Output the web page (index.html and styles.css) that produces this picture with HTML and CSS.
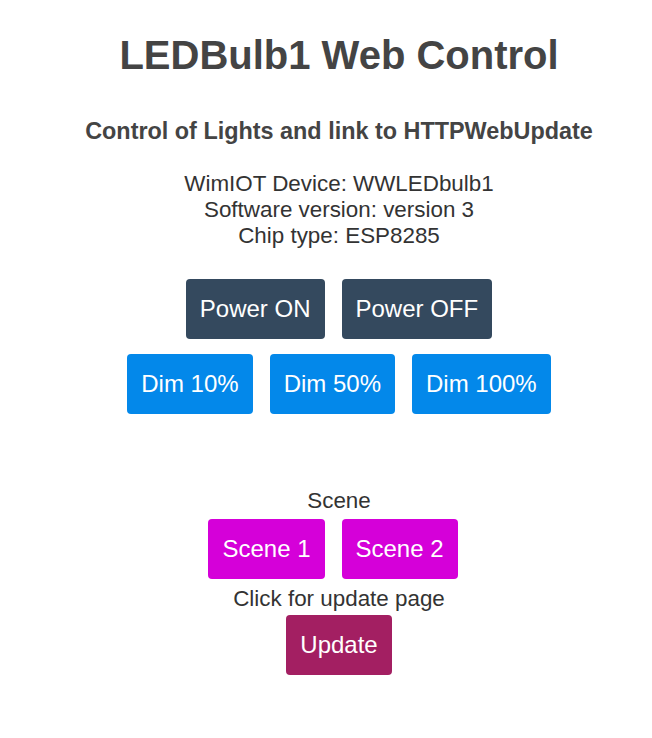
FILE: index.html
```html
<!DOCTYPE html>
<html lang="en">
<head>
<meta charset="UTF-8">
<meta name="viewport" content="width=device-width, initial-scale=1">
<title>LEDBulb1 Web Control</title>
<link rel="stylesheet" href="styles.css">
</head>
<body>
<h1>LEDBulb1 Web Control</h1>
<h3>Control of Lights and link to HTTPWebUpdate</h3>
<p class="info">WimIOT Device: WWLEDbulb1<br>Software version: version 3<br>Chip type: ESP8285</p>
<div class="row">
<a class="button power" href="#">Power ON</a>
<a class="button power" href="#">Power OFF</a>
</div>
<div class="row">
<a class="button dim" href="#">Dim 10%</a>
<a class="button dim" href="#">Dim 50%</a>
<a class="button dim" href="#">Dim 100%</a>
</div>
<div class="label scene-label">Scene</div>
<div class="row scenes">
<a class="button scene" href="#">Scene 1</a>
<a class="button scene" href="#">Scene 2</a>
</div>
<div class="label update-label">Click for update page</div>
<div class="row updates">
<a class="button update" href="#">Update</a>
</div>
</body>
</html>
```

FILE: styles.css
```css
body {
  font-family: "Liberation Sans", Arial, sans-serif;
  color: #333;
  text-align: center;
  margin: 0;
  padding: 8px 8px 8px 34px;
}
h1 {
  font-size: 40px;
  color: #444;
  margin: 25px 0 0;
}
h3 {
  font-size: 23.4px;
  color: #444;
  margin: 40px 0 0;
}
.info {
  font-size: 22.4px;
  margin: 26px 0 0;
}
.row {
  display: flex;
  justify-content: center;
  gap: 17px;
  margin-top: 30px;
}
.row + .row {
  margin-top: 15px;
}
.label {
  font-size: 22.4px;
}
.scene-label {
  margin-top: 74px;
}
.row.scenes {
  margin-top: 5px;
  padding-right: 12px;
}
.update-label {
  margin-top: 7px;
}
.row.updates {
  margin-top: 3px;
}
.button {
  display: inline-block;
  font-size: 24px;
  color: #fff;
  text-decoration: none;
  padding: 16px 14px;
  border-radius: 4px;
}
.power {
  background: #34495e;
}
.dim {
  background: #0388ea;
}
.scene {
  background: #d500d9;
}
.update {
  background: #a31f62;
}
```
